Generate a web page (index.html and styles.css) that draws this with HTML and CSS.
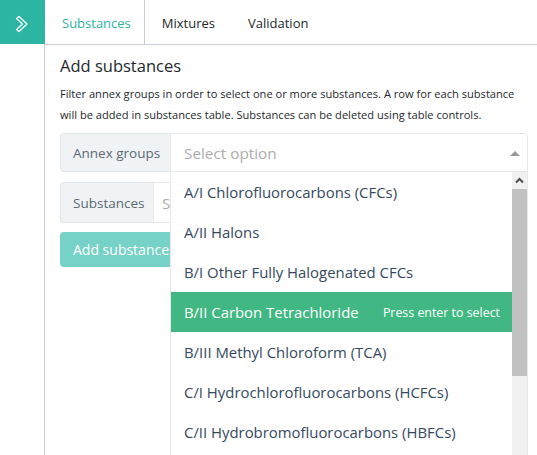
FILE: index.html
```html
<!DOCTYPE html>
<html>
<head>
<meta charset="utf-8">
<link rel="stylesheet" href="styles.css">
</head>
<body>
<div class="app">
  <aside class="sidebar">
    <div class="toggle">
      <svg width="44" height="44" viewBox="0 0 44 44"><path d="M16.5 18.5 L19 16.5 L27 24 L19 31.5 L16.5 29.5 L22.5 24 Z" fill="none" stroke="#fff" stroke-width="1.3" stroke-linejoin="round"/></svg>
    </div>
  </aside>
  <main class="main">
    <nav class="tabs">
      <div class="tab active">Substances</div>
      <div class="tab">Mixtures</div>
      <div class="tab">Validation</div>
    </nav>
    <section class="content">
      <h2 class="title">Add substances</h2>
      <p class="help">Filter annex groups in order to select one or more substances. A row for each substance will be added in substances table. Substances can be deleted using table controls.</p>
      <div class="group">
        <div class="label lbl-annex">Annex groups</div>
        <div class="select open">
          <span class="placeholder">Select option</span>
          <span class="caret"></span>
          <div class="dropdown">
            <ul class="options">
              <li class="option">A/I Chlorofluorocarbons (CFCs)</li>
              <li class="option">A/II Halons</li>
              <li class="option">B/I Other Fully Halogenated CFCs</li>
              <li class="option hl"><span>B/II Carbon Tetrachloride</span><span class="hint">Press enter to select</span></li>
              <li class="option">B/III Methyl Chloroform (TCA)</li>
              <li class="option">C/I Hydrochlorofluorocarbons (HCFCs)</li>
              <li class="option">C/II Hydrobromofluorocarbons (HBFCs)</li>
            </ul>
            <div class="scrollbar">
              <div class="sb-up"><svg width="15" height="17" viewBox="0 0 15 17"><path d="M4 10.5 L7.5 7 L11 10.5" fill="none" stroke="#505050" stroke-width="2"/></svg></div>
              <div class="sb-thumb"></div>
            </div>
          </div>
        </div>
      </div>
      <div class="group group2">
        <div class="label lbl-sub">Substances</div>
        <div class="select"><span class="placeholder">Select option</span></div>
      </div>
      <button class="btn">Add substances</button>
    </section>
  </main>
</div>
</body>
</html>
```
FILE: styles.css
```css
html, body {
  margin: 0;
  padding: 0;
  background: #fff;
}
body {
  font-family: "Open Sans", "Noto Sans", sans-serif;
  color: #23282c;
  width: 537px;
  height: 455px;
  overflow: hidden;
}
.app {
  display: flex;
  height: 455px;
}
.sidebar {
  width: 44px;
  border-right: 1px solid #c8ced3;
  flex: none;
}
.toggle {
  width: 45px;
  height: 44px;
  background: #2bb5a2;
  display: flex;
}
.main {
  flex: 1;
  display: flex;
  flex-direction: column;
}
.tabs {
  display: flex;
  height: 44px;
  border-bottom: 1px solid #c8ced3;
}
.tab {
  font-size: 13px;
  line-height: 46px;
  padding: 0 17px 0 17px;
  color: #23282c;
}
.tab.active {
  color: #2bb5a2;
  border-right: 1px solid #c8ced3;
  padding-right: 13px;
}
.tab + .tab {
  padding-right: 16px;
}
.content {
  padding: 0 9px 0 15px;
  position: relative;
}
.title {
  font-weight: 400;
  font-size: 16.5px;
  margin: 9px 0 0 0;
  line-height: 24px;
}
.help {
  font-size: 11.1px;
  line-height: 21px;
  margin: 5px 0 8px 0;
}
.group {
  display: flex;
  height: 39px;
}
.group2 {
  margin-top: 10px;
  height: 41px;
}
.label {
  background: #f0f3f5;
  border: 1px solid #e4e7ea;
  border-right: none;
  border-radius: 4px 0 0 4px;
  font-size: 13.5px;
  color: #5c6873;
  display: flex;
  align-items: center;
  padding-left: 12px;
  box-sizing: border-box;
}
.lbl-annex { width: 110px; }
.lbl-sub { width: 93px; }
.select {
  flex: 1;
  position: relative;
  border: 1px solid #e8e8e8;
  border-radius: 0 4px 4px 0;
  display: flex;
  align-items: center;
  padding-left: 13px;
}
.select.open {
  border-radius: 0 4px 0 0;
  z-index: 2;
}
.group2 .select { padding-left: 8px; }
.placeholder {
  color: #adadad;
  font-size: 15.3px;
}
.caret {
  position: absolute;
  right: 7px;
  top: 17px;
  border-style: solid;
  border-width: 0 5px 5px;
  border-color: transparent transparent #999;
}
.dropdown {
  position: absolute;
  left: -1px;
  right: -1px;
  top: 38px;
  height: 300px;
  background: #fff;
  border: 1px solid #e8e8e8;
  border-top: none;
  display: flex;
}
.options {
  list-style: none;
  margin: 0;
  padding: 0;
  flex: 1;
}
.option {
  height: 40px;
  display: flex;
  align-items: center;
  justify-content: space-between;
  padding: 0 12px 0 13px;
  font-size: 14.9px;
  color: #35495e;
}
.option.hl {
  background: #41b883;
  color: #fff;
}
.hint {
  font-size: 12.4px;
}
.scrollbar {
  width: 15px;
  background: #f1f1f1;
  flex: none;
}
.sb-up {
  height: 17px;
  display: flex;
}
.sb-thumb {
  height: 187px;
  background: #c1c1c1;
}
.btn {
  margin-top: 9px;
  height: 35px;
  background: #76d1c6;
  color: #fff;
  border: none;
  border-radius: 4px;
  font-family: inherit;
  font-size: 14px;
  padding: 0 13px;
}
```
